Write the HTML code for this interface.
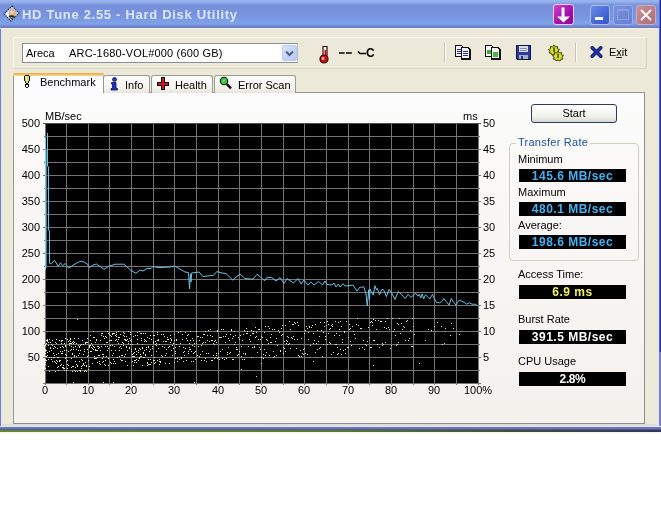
<!DOCTYPE html>
<html><head><meta charset="utf-8">
<style>
html,body{margin:0;padding:0;width:661px;height:512px;overflow:hidden;background:#fff;}
body{position:relative;font-family:"Liberation Sans",sans-serif;font-size:11px;color:#000;}
.abs{position:absolute;}
.lab{position:absolute;font-size:11px;line-height:14px;white-space:nowrap;color:#000;}
#win{position:absolute;left:0;top:0;width:661px;height:432px;background:#ECE9D8;will-change:transform;}
#title{position:absolute;left:0;top:0;width:661px;height:28px;
 background:linear-gradient(to bottom,#98B6EE 0px,#94B0EC 2px,#7E98DC 4px,#7690DC 7px,#7892DE 14px,#7B9AE4 19px,#80A2E8 24px,#7488D0 26px,#6A7AC0 28px);}
.ttxt{position:absolute;left:22px;top:6px;font-weight:bold;font-size:13px;letter-spacing:0.7px;color:#DCE6F8;line-height:18px;white-space:nowrap;}
.tb{position:absolute;top:5px;width:20px;height:20px;border-radius:3px;box-sizing:border-box;}
.txt{position:absolute;white-space:nowrap;line-height:14px;}
.box{position:absolute;left:519px;width:107px;background:#000;}
.val{position:absolute;left:0;width:107px;text-align:center;font-weight:bold;font-size:12px;letter-spacing:0.5px;line-height:14px;}
.tab{position:absolute;top:75px;height:18px;box-sizing:border-box;border:1px solid #9C9C90;border-bottom:none;border-radius:3px 3px 0 0;
 background:linear-gradient(to bottom,#FEFEFE,#F4F3EE 70%,#E6E4DA);}
</style></head><body>
<div id="win">
 <div id="title">
  <svg class="abs" style="left:3px;top:5px" width="17" height="17" viewBox="0 0 17 17">
   <path d="M9 1L16 8L8 16L1 9Z" fill="#c8d4ec" stroke="#1c2440" stroke-width="1.1" stroke-dasharray="1.4 0.9"/>
   <path d="M2.5 9L6 5.5L8 9.5L6 13Z" fill="#eef2f8"/>
   <circle cx="9.6" cy="8.2" r="3.9" fill="#dcb494"/>
   <circle cx="9" cy="7.4" r="1.6" fill="#ecd0b8"/>
   <path d="M5.5 11Q8.5 9.3 12 11.2L8.5 14.5Z" fill="#1c2418"/>
   <path d="M7 12.2Q8.7 11.4 10.4 12.3L8.6 13.6Z" fill="#88a070"/>
  </svg>
  <div class="ttxt">HD Tune 2.55 - Hard Disk Utility</div>
  <!-- purple button -->
  <div class="tb" style="left:553px;top:4px;width:21px;height:21px;border:1px solid #F0C8F0;background:linear-gradient(135deg,#D040D0,#A010A8 60%,#900898);"></div>
  <svg class="abs" style="left:553px;top:4px" width="21" height="21">
   <rect x="8.5" y="3.5" width="3" height="10" fill="#fff"/>
   <path d="M4 12.5H17L10.5 18.5Z" fill="#fff"/>
  </svg>
  <!-- minimize -->
  <div class="tb" style="left:590px;border:1px solid #A8BCF0;background:linear-gradient(135deg,#6C8CE4,#3E62D0 70%,#3A5CC8);"></div>
  <div class="abs" style="left:595px;top:17px;width:8px;height:3px;background:#fff;"></div>
  <!-- maximize disabled -->
  <div class="tb" style="left:613px;border:1px solid #98AEE6;background:linear-gradient(135deg,#7890DC,#6880D4);"></div>
  <div class="abs" style="left:617px;top:9px;width:12px;height:11px;box-sizing:border-box;border:1px solid #8AA0E0;border-top:2px solid #8AA0E0;"></div>
  <!-- close -->
  <div class="tb" style="left:636px;border:1px solid #D0A8C0;background:linear-gradient(135deg,#C89098,#B47880 70%,#A87078);"></div>
  <svg class="abs" style="left:636px;top:5px" width="20" height="20">
   <path d="M5 5L15 15M15 5L5 15" stroke="#fff" stroke-width="1.8"/>
  </svg>
 </div>
 <!-- frame borders -->
 <div class="abs" style="left:0;top:28px;width:1px;height:404px;background:#7080C4;"></div>
 <div class="abs" style="left:1px;top:28px;width:1px;height:399px;background:#E0E4F8;"></div>
 <div class="abs" style="left:659px;top:0;width:1px;height:352px;background:#5C6CCC;"></div>
 <div class="abs" style="left:660px;top:0;width:1px;height:352px;background:#1C2CA8;"></div>
 <div class="abs" style="left:659px;top:352px;width:2px;height:78px;background:#7880C8;"></div>
 <div class="abs" style="left:658px;top:28px;width:1px;height:399px;background:#E0E8F8;"></div>
 <div class="abs" style="left:0;top:426px;width:661px;height:1px;background:#E0E4F8;"></div>
 <div class="abs" style="left:2px;top:424px;width:655px;height:2px;background:#DEDED8;"></div>
 <div class="abs" style="left:0;top:427px;width:661px;height:2px;background:#6E74B8;"></div>
 <div class="abs" style="left:0;top:429px;width:661px;height:1px;background:#505888;"></div>
 <div class="abs" style="left:0;top:430px;width:661px;height:2px;background:linear-gradient(to right,#5E8A3A 0%,#567A38 50%,#3A4C40 80%,#303858 100%);"></div>
 <div class="abs" style="left:0;top:432px;width:661px;height:1px;background:#F0F4E4;"></div>
 <div class="abs" style="left:0;top:28px;width:657px;height:1px;background:#F0F0E8;"></div>

 <!-- rebar -->
 <div class="abs" style="left:13px;top:37px;width:634px;height:32px;box-sizing:border-box;border:1px solid #D8D4C4;border-top-color:#F8F6EE;border-left-color:#F8F6EE;border-radius:3px;"></div>
 <!-- combo -->
 <div class="abs" style="left:22px;top:43px;width:276px;height:20px;box-sizing:border-box;border:1px solid #8A9098;border-right-color:#B8BCC0;background:#fff;"></div>
 <div class="txt" style="left:26px;top:46px;">Areca</div>
 <div class="txt" style="left:69px;top:46px;letter-spacing:0.18px;">ARC-1680-VOL#000 (600 GB)</div>
 <div class="abs" style="left:282px;top:45px;width:15px;height:16px;box-sizing:border-box;border:1px solid #B8CCF8;border-radius:2px;background:linear-gradient(135deg,#D8E4FC,#B4C8F4);"></div>
 <svg class="abs" style="left:282px;top:45px" width="15" height="16">
  <path d="M4 6.5L7.5 10L11 6.5" stroke="#4D6185" stroke-width="2" fill="none"/>
 </svg>
 <!-- thermometer -->
 <svg class="abs" style="left:318px;top:45px" width="12" height="19" viewBox="0 0 12 19">
  <path d="M5 1.5H9V12.5H5Z" fill="#f8f4f4" stroke="#380808" stroke-width="1.2"/>
  <path d="M6.5 5H8.5V13H6.5Z" fill="#c81010"/>
  <circle cx="6" cy="14" r="4" fill="#cc1414" stroke="#380808" stroke-width="1.2"/>
  <circle cx="5" cy="13.5" r="1.3" fill="#f8d0d0"/>
 </svg>
 <svg class="abs" style="left:338px;top:50px" width="16" height="6"><path d="M1 3H6.6M8 3H13.8" stroke="#000" stroke-width="1.5"/></svg>
 <svg class="abs" style="left:357px;top:50px" width="10" height="6"><path d="M1 1.5L3 3.5H9" stroke="#000" stroke-width="1.6" fill="none"/></svg>
 <div class="txt" style="left:366px;top:46px;font-weight:bold;font-size:12px;line-height:14px;">C</div>
 <!-- separators -->
 <div class="abs" style="left:444px;top:43px;width:1px;height:19px;background:#C8C4B4;"></div>
 <div class="abs" style="left:445px;top:43px;width:1px;height:19px;background:#FCFCF8;"></div>
 <div class="abs" style="left:575px;top:43px;width:1px;height:19px;background:#C8C4B4;"></div>
 <div class="abs" style="left:576px;top:43px;width:1px;height:19px;background:#FCFCF8;"></div>
 <!-- toolbar icons -->
 <svg class="abs" style="left:455px;top:45px" width="17" height="16" shape-rendering="crispEdges">
  <path d="M0 0H6L8 2V12H0Z" fill="#101010"/>
  <path d="M1 1H6L7 2V11H1Z" fill="#f4f4fa"/>
  <path d="M2 4H6V5H2ZM2 6H6V7H2ZM2 8H6V9H2Z" fill="#2830a0"/>
  <path d="M6 2H13L16 5V15H6Z" fill="#101010"/>
  <path d="M7 3H12L14 5V13H7Z" fill="#f4f4fa"/>
  <path d="M8 6H13V7H8ZM8 8H13V9H8ZM8 10H13V11H8Z" fill="#2830a0"/>
 </svg>
 <svg class="abs" style="left:485px;top:45px" width="17" height="16" shape-rendering="crispEdges">
  <path d="M0 0H6L8 2V12H0Z" fill="#101010"/>
  <path d="M1 1H6L7 2V11H1Z" fill="#f4f4fa"/>
  <path d="M2 5H6V9H2Z" fill="#40b030"/>
  <path d="M6 2H13L16 5V15H6Z" fill="#101010"/>
  <path d="M7 3H12L14 5V13H7Z" fill="#f4f4fa"/>
  <path d="M8 7H13V12H8Z" fill="#48b838"/>
 </svg>
 <svg class="abs" style="left:516px;top:45px" width="16" height="16" shape-rendering="crispEdges">
  <path d="M0 0H15V15H1L0 14Z" fill="#101848"/>
  <path d="M1 1H14V14H2L1 13Z" fill="#2a3aa0"/>
  <path d="M3 1H12V7H3Z" fill="#d8dce8"/>
  <path d="M4 3H11V4H4ZM4 5H11V6H4Z" fill="#8890b8"/>
  <path d="M3 10H12V14H3Z" fill="#a8acc0"/>
  <path d="M5 11H7V14H5Z" fill="#303860"/>
 </svg>
 <svg class="abs" style="left:547px;top:44px" width="18" height="18">
  <path d="M7 1L8.5 3L10.5 2.5L10.5 4.8L12.5 5.5L11 7.3L12 9L9.8 9.2L9 11L7 10L5 11L4.2 9.2L2 9L3 7.3L1.5 5.5L3.5 4.8L3.5 2.5L5.5 3Z" fill="#d8e020" stroke="#303010" stroke-width="0.9"/>
  <path d="M11 7L12.5 9L14.5 8.5L14.5 10.8L16.5 11.5L15 13.3L16 15L13.8 15.2L13 17L11 16L9 17L8.2 15.2L6 15L7 13.3L5.5 11.5L7.5 10.8L7.5 8.5L9.5 9Z" fill="#d8e020" stroke="#303010" stroke-width="0.9"/>
  <path d="M7 3.5V8M11 9.5V14" stroke="#404010" stroke-width="1.5"/>
 </svg>
 <svg class="abs" style="left:589px;top:45px" width="15" height="14">
  <path d="M3.2 2.8L11.8 11.2M11.8 2.8L3.2 11.2" stroke="#0a0a50" stroke-width="3.6" stroke-linecap="round"/>
  <path d="M3.2 2.8L11.8 11.2M11.8 2.8L3.2 11.2" stroke="#2234b0" stroke-width="2" stroke-linecap="round"/>
 </svg>
 <div class="txt" style="left:609px;top:45px;">E<span style="text-decoration:underline">x</span>it</div>

 <!-- tabs -->
 <div class="abs" style="left:13px;top:92px;width:632px;height:332px;box-sizing:border-box;border:1px solid #919B9C;border-right-color:#8E9090;border-bottom-color:#8E9090;background:linear-gradient(to bottom,#FCFCFC,#F8F7F5 40%,#F2F1EC);"></div>
 <div class="tab" style="left:103px;width:47px;"></div>
 <div class="tab" style="left:151px;width:62px;"></div>
 <div class="tab" style="left:214px;width:82px;"></div>
 <div class="abs" style="left:13px;top:73px;width:91px;height:20px;box-sizing:border-box;border:1px solid #919B9C;border-bottom:none;border-radius:3px 3px 0 0;background:#FCFCFE;"></div>
 <div class="abs" style="left:13px;top:73px;width:91px;height:3px;border-radius:3px 3px 0 0;background:linear-gradient(to bottom,#E8A848,#F4C468 60%,#FAD896);"></div>
 <svg class="abs" style="left:24px;top:75px" width="6" height="13" shape-rendering="crispEdges">
  <path d="M1 0H5V1H6V6H5V8H4V9H2V8H1V6H0V1H1Z" fill="#101010"/>
  <path d="M1 1H5V6H4V8H2V6H1Z" fill="#d8e060"/>
  <path d="M2 1H3V6H2Z" fill="#f0f8a0"/>
  <path d="M1 9H5V12H4V13H2V12H1Z" fill="#101010"/>
  <path d="M2 10H4V12H2Z" fill="#fff"/>
 </svg>
 <div class="txt" style="left:40px;top:75px;">Benchmark</div>
 <svg class="abs" style="left:110px;top:77px" width="9" height="14">
  <circle cx="4.5" cy="2.5" r="2" fill="#2840c8" stroke="#101860" stroke-width="0.8"/>
  <path d="M1.5 5.5H6V11.5H7.5V13H1V11.5H2.5V7H1.5Z" fill="#1830c0" stroke="#101860" stroke-width="0.8"/>
 </svg>
 <div class="txt" style="left:125px;top:78px;">Info</div>
 <svg class="abs" style="left:156px;top:77px" width="14" height="14">
  <path d="M5 0H9V5H13V9H9V13H5V9H1V5H5Z" fill="#101010" shape-rendering="crispEdges"/>
  <path d="M6 1H8V6H12V8H8V12H6V8H2V6H6Z" fill="#d01818" shape-rendering="crispEdges"/>
 </svg>
 <div class="txt" style="left:175px;top:78px;">Health</div>
 <svg class="abs" style="left:219px;top:76px" width="14" height="15">
  <circle cx="5" cy="5" r="3.7" fill="#40c040" stroke="#082008" stroke-width="1.1"/>
  <path d="M3.5 6L6 3.5" stroke="#a0f0a0" stroke-width="1"/>
  <path d="M7.8 8.2L12 12.4" stroke="#100818" stroke-width="2.4"/>
 </svg>
 <div class="txt" style="left:238px;top:78px;">Error Scan</div>

 <svg class="abs" style="left:0;top:0" width="661" height="432"><rect x="45" y="123" width="434" height="261" fill="#000"/><path d="M45.5 123V385 M66.5 123V385 M88.5 123V385 M109.5 123V385 M131.5 123V385 M153.5 123V385 M174.5 123V385 M196.5 123V385 M218.5 123V385 M239.5 123V385 M261.5 123V385 M283.5 123V385 M304.5 123V385 M326.5 123V385 M348.5 123V385 M369.5 123V385 M391.5 123V385 M413.5 123V385 M434.5 123V385 M456.5 123V385 M478.5 123V385 M43 123.5H481 M44 136.5H480 M43 149.5H481 M44 162.5H480 M43 175.5H481 M44 188.5H480 M43 201.5H481 M44 214.5H480 M43 227.5H481 M44 240.5H480 M43 253.5H481 M44 266.5H480 M43 279.5H481 M44 292.5H480 M43 305.5H481 M44 318.5H480 M43 331.5H481 M44 344.5H480 M43 357.5H481 M44 370.5H480 M43 383.5H481" stroke="#747474" stroke-width="1" fill="none" shape-rendering="crispEdges"/><path d="M43 123.5H481" stroke="#505050" stroke-width="1" shape-rendering="crispEdges"/><path d="M46 343h1v1h-1zM46 360h1v1h-1zM46 340h1v1h-1zM46 356h1v1h-1zM46 350h1v1h-1zM47 355h1v1h-1zM47 339h1v1h-1zM47 352h1v1h-1zM47 340h1v1h-1zM47 341h1v1h-1zM48 366h1v1h-1zM48 342h1v1h-1zM48 345h1v1h-1zM48 359h1v1h-1zM49 357h1v1h-1zM49 351h1v1h-1zM49 371h1v1h-1zM49 339h1v1h-1zM50 347h1v1h-1zM50 342h1v1h-1zM50 342h1v1h-1zM50 348h1v1h-1zM51 344h1v1h-1zM51 357h1v1h-1zM51 359h1v1h-1zM51 350h1v1h-1zM52 340h1v1h-1zM52 340h1v1h-1zM52 345h1v1h-1zM52 361h1v1h-1zM53 348h1v1h-1zM53 357h1v1h-1zM53 353h1v1h-1zM53 348h1v1h-1zM54 361h1v1h-1zM54 346h1v1h-1zM54 357h1v1h-1zM54 355h1v1h-1zM55 362h1v1h-1zM55 347h1v1h-1zM55 371h1v1h-1zM55 342h1v1h-1zM56 363h1v1h-1zM56 343h1v1h-1zM56 354h1v1h-1zM56 339h1v1h-1zM56 360h1v1h-1zM57 357h1v1h-1zM57 367h1v1h-1zM57 348h1v1h-1zM57 361h1v1h-1zM58 357h1v1h-1zM58 353h1v1h-1zM58 366h1v1h-1zM58 370h1v1h-1zM59 360h1v1h-1zM59 340h1v1h-1zM59 361h1v1h-1zM59 360h1v1h-1zM60 365h1v1h-1zM60 347h1v1h-1zM60 351h1v1h-1zM60 360h1v1h-1zM61 353h1v1h-1zM61 343h1v1h-1zM61 341h1v1h-1zM61 340h1v1h-1zM61 364h1v1h-1zM62 346h1v1h-1zM62 351h1v1h-1zM62 367h1v1h-1zM62 340h1v1h-1zM62 353h1v1h-1zM63 368h1v1h-1zM63 365h1v1h-1zM63 367h1v1h-1zM63 347h1v1h-1zM64 350h1v1h-1zM64 368h1v1h-1zM64 370h1v1h-1zM64 343h1v1h-1zM64 343h1v1h-1zM65 345h1v1h-1zM65 354h1v1h-1zM65 358h1v1h-1zM65 346h1v1h-1zM65 338h1v1h-1zM66 350h1v1h-1zM66 357h1v1h-1zM66 370h1v1h-1zM66 361h1v1h-1zM66 355h1v1h-1zM67 360h1v1h-1zM67 339h1v1h-1zM67 368h1v1h-1zM67 364h1v1h-1zM68 365h1v1h-1zM68 351h1v1h-1zM68 351h1v1h-1zM68 341h1v1h-1zM69 340h1v1h-1zM69 340h1v1h-1zM69 345h1v1h-1zM69 343h1v1h-1zM70 339h1v1h-1zM70 338h1v1h-1zM70 343h1v1h-1zM70 341h1v1h-1zM70 350h1v1h-1zM71 367h1v1h-1zM71 358h1v1h-1zM71 343h1v1h-1zM71 346h1v1h-1zM71 349h1v1h-1zM72 342h1v1h-1zM72 366h1v1h-1zM72 371h1v1h-1zM72 353h1v1h-1zM72 354h1v1h-1zM73 341h1v1h-1zM73 349h1v1h-1zM73 347h1v1h-1zM73 366h1v1h-1zM73 343h1v1h-1zM74 370h1v1h-1zM74 355h1v1h-1zM74 342h1v1h-1zM74 356h1v1h-1zM74 338h1v1h-1zM75 371h1v1h-1zM75 367h1v1h-1zM75 361h1v1h-1zM75 346h1v1h-1zM76 343h1v1h-1zM76 364h1v1h-1zM76 356h1v1h-1zM76 364h1v1h-1zM76 349h1v1h-1zM77 365h1v1h-1zM77 371h1v1h-1zM77 366h1v1h-1zM77 365h1v1h-1zM77 365h1v1h-1zM78 345h1v1h-1zM78 355h1v1h-1zM78 350h1v1h-1zM78 338h1v1h-1zM79 347h1v1h-1zM79 346h1v1h-1zM79 361h1v1h-1zM79 370h1v1h-1zM79 353h1v1h-1zM80 371h1v1h-1zM80 370h1v1h-1zM80 350h1v1h-1zM80 345h1v1h-1zM81 344h1v1h-1zM81 344h1v1h-1zM81 359h1v1h-1zM81 368h1v1h-1zM81 366h1v1h-1zM82 360h1v1h-1zM82 365h1v1h-1zM82 340h1v1h-1zM82 360h1v1h-1zM83 364h1v1h-1zM83 363h1v1h-1zM83 354h1v1h-1zM83 344h1v1h-1zM84 349h1v1h-1zM84 365h1v1h-1zM84 371h1v1h-1zM84 351h1v1h-1zM85 370h1v1h-1zM85 362h1v1h-1zM85 343h1v1h-1zM85 342h1v1h-1zM85 343h1v1h-1zM86 365h1v1h-1zM86 342h1v1h-1zM86 366h1v1h-1zM86 371h1v1h-1zM87 349h1v1h-1zM87 356h1v1h-1zM87 342h1v1h-1zM87 338h1v1h-1zM88 360h1v1h-1zM88 355h1v1h-1zM88 369h1v1h-1zM88 352h1v1h-1zM89 366h1v1h-1zM89 345h1v1h-1zM89 346h1v1h-1zM89 347h1v1h-1zM90 351h1v1h-1zM90 340h1v1h-1zM90 345h1v1h-1zM90 335h1v1h-1zM91 343h1v1h-1zM91 347h1v1h-1zM91 351h1v1h-1zM92 345h1v1h-1zM92 363h1v1h-1zM92 348h1v1h-1zM93 349h1v1h-1zM93 331h1v1h-1zM93 346h1v1h-1zM93 337h1v1h-1zM94 358h1v1h-1zM94 337h1v1h-1zM94 347h1v1h-1zM94 356h1v1h-1zM95 342h1v1h-1zM95 349h1v1h-1zM95 350h1v1h-1zM95 358h1v1h-1zM96 350h1v1h-1zM96 339h1v1h-1zM96 340h1v1h-1zM96 358h1v1h-1zM97 350h1v1h-1zM97 357h1v1h-1zM97 362h1v1h-1zM97 346h1v1h-1zM98 348h1v1h-1zM98 348h1v1h-1zM98 355h1v1h-1zM98 346h1v1h-1zM99 347h1v1h-1zM99 363h1v1h-1zM99 355h1v1h-1zM99 361h1v1h-1zM100 340h1v1h-1zM100 350h1v1h-1zM100 364h1v1h-1zM101 335h1v1h-1zM101 335h1v1h-1zM101 346h1v1h-1zM101 333h1v1h-1zM102 333h1v1h-1zM102 354h1v1h-1zM102 358h1v1h-1zM102 362h1v1h-1zM103 356h1v1h-1zM103 354h1v1h-1zM103 336h1v1h-1zM103 361h1v1h-1zM104 338h1v1h-1zM104 364h1v1h-1zM104 344h1v1h-1zM105 365h1v1h-1zM105 360h1v1h-1zM105 336h1v1h-1zM105 346h1v1h-1zM106 342h1v1h-1zM106 337h1v1h-1zM106 342h1v1h-1zM106 356h1v1h-1zM107 350h1v1h-1zM107 346h1v1h-1zM107 331h1v1h-1zM107 342h1v1h-1zM108 348h1v1h-1zM108 333h1v1h-1zM108 365h1v1h-1zM108 358h1v1h-1zM109 334h1v1h-1zM109 340h1v1h-1zM109 332h1v1h-1zM110 340h1v1h-1zM110 335h1v1h-1zM110 345h1v1h-1zM110 362h1v1h-1zM111 340h1v1h-1zM111 336h1v1h-1zM111 363h1v1h-1zM111 350h1v1h-1zM112 334h1v1h-1zM112 333h1v1h-1zM112 355h1v1h-1zM112 345h1v1h-1zM113 363h1v1h-1zM113 353h1v1h-1zM113 359h1v1h-1zM113 333h1v1h-1zM114 333h1v1h-1zM114 361h1v1h-1zM114 346h1v1h-1zM115 350h1v1h-1zM115 363h1v1h-1zM115 340h1v1h-1zM115 335h1v1h-1zM116 339h1v1h-1zM116 334h1v1h-1zM116 336h1v1h-1zM116 332h1v1h-1zM117 341h1v1h-1zM117 341h1v1h-1zM117 357h1v1h-1zM117 341h1v1h-1zM118 337h1v1h-1zM118 343h1v1h-1zM118 331h1v1h-1zM118 339h1v1h-1zM119 356h1v1h-1zM119 350h1v1h-1zM119 337h1v1h-1zM119 347h1v1h-1zM120 334h1v1h-1zM120 359h1v1h-1zM120 346h1v1h-1zM121 360h1v1h-1zM121 344h1v1h-1zM121 348h1v1h-1zM121 355h1v1h-1zM122 342h1v1h-1zM122 360h1v1h-1zM122 355h1v1h-1zM123 345h1v1h-1zM123 343h1v1h-1zM123 332h1v1h-1zM123 335h1v1h-1zM124 356h1v1h-1zM124 339h1v1h-1zM124 336h1v1h-1zM124 333h1v1h-1zM125 361h1v1h-1zM125 354h1v1h-1zM125 340h1v1h-1zM125 339h1v1h-1zM126 347h1v1h-1zM126 336h1v1h-1zM126 346h1v1h-1zM126 340h1v1h-1zM127 365h1v1h-1zM127 350h1v1h-1zM127 339h1v1h-1zM128 341h1v1h-1zM128 343h1v1h-1zM128 331h1v1h-1zM129 347h1v1h-1zM129 348h1v1h-1zM129 338h1v1h-1zM129 348h1v1h-1zM130 340h1v1h-1zM130 334h1v1h-1zM130 344h1v1h-1zM130 332h1v1h-1zM131 341h1v1h-1zM131 339h1v1h-1zM131 351h1v1h-1zM131 349h1v1h-1zM132 354h1v1h-1zM132 356h1v1h-1zM132 361h1v1h-1zM132 344h1v1h-1zM133 365h1v1h-1zM133 336h1v1h-1zM133 356h1v1h-1zM133 353h1v1h-1zM134 360h1v1h-1zM134 362h1v1h-1zM134 352h1v1h-1zM134 356h1v1h-1zM135 335h1v1h-1zM135 349h1v1h-1zM135 348h1v1h-1zM135 360h1v1h-1zM136 359h1v1h-1zM136 351h1v1h-1zM136 362h1v1h-1zM136 354h1v1h-1zM137 339h1v1h-1zM137 332h1v1h-1zM137 335h1v1h-1zM137 343h1v1h-1zM138 360h1v1h-1zM138 350h1v1h-1zM138 352h1v1h-1zM138 352h1v1h-1zM139 348h1v1h-1zM139 331h1v1h-1zM139 358h1v1h-1zM139 357h1v1h-1zM140 349h1v1h-1zM140 354h1v1h-1zM140 333h1v1h-1zM140 356h1v1h-1zM141 333h1v1h-1zM141 340h1v1h-1zM141 356h1v1h-1zM141 338h1v1h-1zM142 365h1v1h-1zM142 348h1v1h-1zM142 344h1v1h-1zM142 347h1v1h-1zM143 357h1v1h-1zM143 352h1v1h-1zM143 353h1v1h-1zM143 333h1v1h-1zM144 339h1v1h-1zM144 357h1v1h-1zM144 341h1v1h-1zM144 350h1v1h-1zM145 333h1v1h-1zM145 340h1v1h-1zM145 354h1v1h-1zM145 355h1v1h-1zM146 341h1v1h-1zM146 349h1v1h-1zM146 347h1v1h-1zM146 347h1v1h-1zM147 362h1v1h-1zM147 337h1v1h-1zM147 365h1v1h-1zM147 363h1v1h-1zM148 347h1v1h-1zM148 359h1v1h-1zM148 364h1v1h-1zM148 346h1v1h-1zM149 338h1v1h-1zM149 364h1v1h-1zM149 338h1v1h-1zM149 351h1v1h-1zM150 349h1v1h-1zM150 364h1v1h-1zM150 335h1v1h-1zM150 359h1v1h-1zM151 362h1v1h-1zM151 355h1v1h-1zM151 339h1v1h-1zM151 362h1v1h-1zM152 331h1v1h-1zM152 331h1v1h-1zM152 348h1v1h-1zM152 346h1v1h-1zM153 335h1v1h-1zM153 343h1v1h-1zM153 342h1v1h-1zM153 360h1v1h-1zM154 357h1v1h-1zM154 360h1v1h-1zM154 335h1v1h-1zM154 363h1v1h-1zM155 362h1v1h-1zM155 341h1v1h-1zM155 344h1v1h-1zM155 344h1v1h-1zM156 351h1v1h-1zM156 343h1v1h-1zM156 345h1v1h-1zM157 332h1v1h-1zM157 334h1v1h-1zM157 360h1v1h-1zM157 340h1v1h-1zM158 339h1v1h-1zM158 340h1v1h-1zM158 348h1v1h-1zM159 344h1v1h-1zM159 364h1v1h-1zM159 361h1v1h-1zM159 359h1v1h-1zM160 361h1v1h-1zM160 362h1v1h-1zM161 355h1v1h-1zM161 334h1v1h-1zM162 346h1v1h-1zM162 356h1v1h-1zM163 341h1v1h-1zM163 334h1v1h-1zM164 336h1v1h-1zM164 347h1v1h-1zM165 341h1v1h-1zM165 355h1v1h-1zM165 363h1v1h-1zM166 353h1v1h-1zM166 341h1v1h-1zM166 349h1v1h-1zM167 337h1v1h-1zM167 337h1v1h-1zM167 339h1v1h-1zM168 347h1v1h-1zM168 339h1v1h-1zM169 363h1v1h-1zM169 346h1v1h-1zM170 338h1v1h-1zM170 335h1v1h-1zM170 342h1v1h-1zM171 339h1v1h-1zM171 340h1v1h-1zM171 350h1v1h-1zM172 355h1v1h-1zM172 345h1v1h-1zM173 348h1v1h-1zM173 343h1v1h-1zM174 334h1v1h-1zM174 340h1v1h-1zM174 362h1v1h-1zM175 347h1v1h-1zM175 351h1v1h-1zM175 358h1v1h-1zM176 340h1v1h-1zM176 339h1v1h-1zM176 344h1v1h-1zM177 361h1v1h-1zM177 358h1v1h-1zM178 332h1v1h-1zM178 332h1v1h-1zM179 359h1v1h-1zM179 346h1v1h-1zM180 331h1v1h-1zM180 343h1v1h-1zM181 357h1v1h-1zM181 358h1v1h-1zM182 339h1v1h-1zM182 334h1v1h-1zM183 347h1v1h-1zM183 352h1v1h-1zM183 361h1v1h-1zM184 351h1v1h-1zM184 355h1v1h-1zM185 348h1v1h-1zM185 332h1v1h-1zM186 338h1v1h-1zM186 360h1v1h-1zM187 340h1v1h-1zM187 335h1v1h-1zM188 351h1v1h-1zM188 353h1v1h-1zM188 334h1v1h-1zM189 347h1v1h-1zM189 349h1v1h-1zM189 343h1v1h-1zM190 349h1v1h-1zM190 331h1v1h-1zM190 340h1v1h-1zM191 361h1v1h-1zM191 351h1v1h-1zM192 345h1v1h-1zM192 338h1v1h-1zM193 361h1v1h-1zM193 353h1v1h-1zM193 340h1v1h-1zM194 346h1v1h-1zM194 352h1v1h-1zM194 343h1v1h-1zM195 351h1v1h-1zM195 359h1v1h-1zM196 331h1v1h-1zM196 341h1v1h-1zM196 343h1v1h-1zM197 336h1v1h-1zM197 355h1v1h-1zM198 346h1v1h-1zM198 336h1v1h-1zM199 340h1v1h-1zM199 356h1v1h-1zM200 337h1v1h-1zM200 354h1v1h-1zM201 360h1v1h-1zM201 345h1v1h-1zM202 337h1v1h-1zM202 343h1v1h-1zM202 351h1v1h-1zM203 334h1v1h-1zM203 342h1v1h-1zM204 360h1v1h-1zM204 334h1v1h-1zM205 331h1v1h-1zM205 342h1v1h-1zM205 358h1v1h-1zM206 353h1v1h-1zM206 361h1v1h-1zM207 340h1v1h-1zM207 335h1v1h-1zM208 353h1v1h-1zM208 330h1v1h-1zM209 341h1v1h-1zM209 341h1v1h-1zM210 335h1v1h-1zM210 329h1v1h-1zM211 340h1v1h-1zM211 360h1v1h-1zM212 360h1v1h-1zM212 336h1v1h-1zM212 340h1v1h-1zM213 355h1v1h-1zM213 343h1v1h-1zM214 344h1v1h-1zM214 341h1v1h-1zM214 358h1v1h-1zM215 340h1v1h-1zM215 357h1v1h-1zM216 342h1v1h-1zM216 355h1v1h-1zM216 353h1v1h-1zM217 330h1v1h-1zM217 331h1v1h-1zM217 358h1v1h-1zM218 353h1v1h-1zM218 357h1v1h-1zM219 337h1v1h-1zM219 359h1v1h-1zM220 337h1v1h-1zM220 351h1v1h-1zM221 337h1v1h-1zM221 329h1v1h-1zM222 358h1v1h-1zM222 349h1v1h-1zM223 329h1v1h-1zM223 336h1v1h-1zM224 359h1v1h-1zM224 359h1v1h-1zM225 336h1v1h-1zM225 342h1v1h-1zM226 358h1v1h-1zM226 334h1v1h-1zM227 352h1v1h-1zM227 354h1v1h-1zM228 347h1v1h-1zM228 338h1v1h-1zM229 340h1v1h-1zM229 353h1v1h-1zM230 334h1v1h-1zM230 352h1v1h-1zM231 330h1v1h-1zM231 329h1v1h-1zM232 338h1v1h-1zM232 359h1v1h-1zM233 359h1v1h-1zM233 336h1v1h-1zM234 331h1v1h-1zM234 344h1v1h-1zM235 342h1v1h-1zM235 335h1v1h-1zM236 347h1v1h-1zM236 349h1v1h-1zM237 355h1v1h-1zM237 349h1v1h-1zM238 354h1v1h-1zM238 337h1v1h-1zM239 339h1v1h-1zM239 351h1v1h-1zM240 335h1v1h-1zM240 335h1v1h-1zM241 356h1v1h-1zM241 346h1v1h-1zM242 340h1v1h-1zM242 359h1v1h-1zM243 334h1v1h-1zM243 353h1v1h-1zM244 359h1v1h-1zM244 330h1v1h-1zM245 353h1v1h-1zM245 354h1v1h-1zM246 328h1v1h-1zM247 331h1v1h-1zM247 333h1v1h-1zM248 346h1v1h-1zM249 339h1v1h-1zM250 341h1v1h-1zM250 335h1v1h-1zM251 357h1v1h-1zM251 330h1v1h-1zM252 347h1v1h-1zM252 333h1v1h-1zM253 331h1v1h-1zM253 333h1v1h-1zM254 346h1v1h-1zM254 347h1v1h-1zM255 327h1v1h-1zM255 337h1v1h-1zM256 332h1v1h-1zM256 336h1v1h-1zM257 352h1v1h-1zM257 344h1v1h-1zM258 329h1v1h-1zM258 339h1v1h-1zM259 347h1v1h-1zM259 329h1v1h-1zM260 349h1v1h-1zM260 339h1v1h-1zM261 336h1v1h-1zM261 357h1v1h-1zM262 344h1v1h-1zM262 337h1v1h-1zM263 354h1v1h-1zM263 358h1v1h-1zM264 332h1v1h-1zM264 349h1v1h-1zM265 326h1v1h-1zM265 355h1v1h-1zM266 352h1v1h-1zM266 339h1v1h-1zM267 340h1v1h-1zM268 326h1v1h-1zM268 343h1v1h-1zM269 355h1v1h-1zM269 328h1v1h-1zM270 337h1v1h-1zM270 342h1v1h-1zM271 334h1v1h-1zM271 342h1v1h-1zM272 329h1v1h-1zM273 351h1v1h-1zM273 357h1v1h-1zM274 329h1v1h-1zM274 356h1v1h-1zM275 341h1v1h-1zM276 355h1v1h-1zM276 338h1v1h-1zM277 345h1v1h-1zM278 330h1v1h-1zM279 332h1v1h-1zM280 351h1v1h-1zM280 350h1v1h-1zM281 328h1v1h-1zM281 335h1v1h-1zM282 334h1v1h-1zM282 325h1v1h-1zM283 347h1v1h-1zM283 353h1v1h-1zM284 341h1v1h-1zM284 348h1v1h-1zM285 351h1v1h-1zM285 325h1v1h-1zM286 340h1v1h-1zM286 343h1v1h-1zM287 336h1v1h-1zM287 341h1v1h-1zM288 344h1v1h-1zM288 337h1v1h-1zM289 321h1v1h-1zM289 343h1v1h-1zM290 329h1v1h-1zM290 348h1v1h-1zM291 337h1v1h-1zM292 338h1v1h-1zM292 324h1v1h-1zM293 336h1v1h-1zM293 324h1v1h-1zM294 339h1v1h-1zM294 322h1v1h-1zM295 323h1v1h-1zM296 348h1v1h-1zM297 322h1v1h-1zM297 339h1v1h-1zM298 355h1v1h-1zM298 325h1v1h-1zM299 356h1v1h-1zM300 350h1v1h-1zM301 356h1v1h-1zM301 338h1v1h-1zM302 353h1v1h-1zM303 349h1v1h-1zM303 354h1v1h-1zM304 333h1v1h-1zM304 348h1v1h-1zM305 353h1v1h-1zM305 330h1v1h-1zM306 326h1v1h-1zM307 354h1v1h-1zM307 328h1v1h-1zM308 339h1v1h-1zM308 332h1v1h-1zM309 327h1v1h-1zM309 326h1v1h-1zM310 345h1v1h-1zM311 327h1v1h-1zM312 325h1v1h-1zM313 343h1v1h-1zM313 333h1v1h-1zM314 340h1v1h-1zM315 352h1v1h-1zM315 324h1v1h-1zM316 343h1v1h-1zM317 349h1v1h-1zM317 330h1v1h-1zM318 341h1v1h-1zM319 348h1v1h-1zM319 336h1v1h-1zM320 347h1v1h-1zM320 322h1v1h-1zM321 330h1v1h-1zM322 356h1v1h-1zM323 344h1v1h-1zM323 332h1v1h-1zM324 322h1v1h-1zM324 326h1v1h-1zM325 336h1v1h-1zM325 339h1v1h-1zM326 325h1v1h-1zM327 344h1v1h-1zM327 321h1v1h-1zM328 333h1v1h-1zM328 324h1v1h-1zM329 329h1v1h-1zM329 342h1v1h-1zM330 328h1v1h-1zM330 343h1v1h-1zM331 325h1v1h-1zM331 354h1v1h-1zM332 326h1v1h-1zM332 324h1v1h-1zM333 352h1v1h-1zM334 335h1v1h-1zM335 321h1v1h-1zM335 344h1v1h-1zM336 333h1v1h-1zM336 344h1v1h-1zM337 354h1v1h-1zM337 347h1v1h-1zM338 353h1v1h-1zM338 322h1v1h-1zM339 335h1v1h-1zM339 329h1v1h-1zM340 349h1v1h-1zM340 321h1v1h-1zM341 354h1v1h-1zM341 326h1v1h-1zM342 342h1v1h-1zM342 339h1v1h-1zM343 350h1v1h-1zM344 332h1v1h-1zM344 331h1v1h-1zM345 353h1v1h-1zM345 349h1v1h-1zM346 321h1v1h-1zM347 347h1v1h-1zM348 347h1v1h-1zM348 337h1v1h-1zM349 324h1v1h-1zM349 329h1v1h-1zM350 328h1v1h-1zM350 341h1v1h-1zM351 345h1v1h-1zM352 326h1v1h-1zM353 331h1v1h-1zM354 334h1v1h-1zM355 338h1v1h-1zM356 324h1v1h-1zM357 318h1v1h-1zM358 325h1v1h-1zM359 348h1v1h-1zM360 328h1v1h-1zM361 328h1v1h-1zM362 347h1v1h-1zM363 340h1v1h-1zM364 349h1v1h-1zM365 344h1v1h-1zM366 345h1v1h-1zM367 341h1v1h-1zM368 327h1v1h-1zM369 337h1v1h-1zM370 347h1v1h-1zM370 322h1v1h-1zM371 321h1v1h-1zM371 347h1v1h-1zM372 322h1v1h-1zM373 319h1v1h-1zM373 340h1v1h-1zM374 340h1v1h-1zM375 320h1v1h-1zM376 329h1v1h-1zM377 344h1v1h-1zM378 320h1v1h-1zM379 347h1v1h-1zM380 321h1v1h-1zM381 321h1v1h-1zM382 345h1v1h-1zM382 343h1v1h-1zM383 344h1v1h-1zM384 327h1v1h-1zM385 321h1v1h-1zM385 342h1v1h-1zM386 328h1v1h-1zM387 318h1v1h-1zM388 327h1v1h-1zM389 329h1v1h-1zM390 348h1v1h-1zM391 345h1v1h-1zM392 318h1v1h-1zM393 331h1v1h-1zM394 329h1v1h-1zM395 335h1v1h-1zM396 345h1v1h-1zM397 344h1v1h-1zM397 323h1v1h-1zM398 324h1v1h-1zM398 342h1v1h-1zM399 318h1v1h-1zM400 333h1v1h-1zM401 323h1v1h-1zM402 329h1v1h-1zM403 326h1v1h-1zM404 327h1v1h-1zM405 340h1v1h-1zM406 321h1v1h-1zM407 320h1v1h-1zM408 340h1v1h-1zM409 338h1v1h-1zM410 330h1v1h-1zM411 346h1v1h-1zM412 346h1v1h-1zM412 318h1v1h-1zM413 326h1v1h-1zM414 334h1v1h-1zM425 340h1v1h-1zM428 329h1v1h-1zM431 330h1v1h-1zM434 326h1v1h-1zM437 322h1v1h-1zM441 326h1v1h-1zM442 344h1v1h-1zM444 343h1v1h-1zM445 328h1v1h-1zM450 335h1v1h-1zM451 323h1v1h-1zM453 328h1v1h-1zM459 334h1v1h-1zM45 344h1v1h-1zM45 345h1v1h-1zM45 349h1v1h-1zM45 350h1v1h-1zM45 351h1v1h-1zM45 353h1v1h-1zM45 356h1v1h-1zM45 359h1v1h-1zM45 360h1v1h-1zM45 362h1v1h-1zM45 364h1v1h-1zM45 368h1v1h-1zM373 365h1v1h-1zM313 361h1v1h-1zM256 376h1v1h-1zM153 341h1v1h-1zM246 333h1v1h-1zM419 363h1v1h-1zM372 325h1v1h-1zM175 353h1v1h-1zM241 369h1v1h-1zM77 319h1v1h-1zM84 371h1v1h-1zM261 363h1v1h-1zM194 382h1v1h-1zM113 382h1v1h-1zM73 382h1v1h-1zM103 382h1v1h-1z" fill="#e8e8a0"/><path d="M45.5 138V270" stroke="#80c8e0" stroke-width="1" shape-rendering="crispEdges"/><path d="M46.5 150V268" stroke="#3a7890" stroke-width="1" shape-rendering="crispEdges"/><polyline points="47.5,133 47.5,166 48.5,167 48.5,230 49.5,231 49.5,263.4 51.1,264 54.7,260.5 58.2,266.4 60.5,262.9 62.9,265.8 65.2,263.4 68.7,268.1 74,264.6 78.1,262.3 81,261.1 84.5,262.3 87.5,264 89.2,267.5 92.8,265.2 96.3,264 100,266.4 104,269.3 109,266 113,265 115,264.2 124,264.2 131,270.5 136,273.3 140,270 143,271 147,268.5 151,268.5 153,266.5 158,267.5 165,267.3 170,267 174.5,266 185,272 188.5,272.5 189.5,289 190.5,274 191,282 191.6,273 199,272 203,276.6 207,276 213,275.4 217,271.6 222,273 226,273.5 232.6,280 240,274 245,278.5 250,279 253,279 257,274.4 260,276.5 263,279.5 265,280.5 266.8,277.7 271.6,277.5 276,281 280,277.5 284,283.5 287,278.6 293.5,283 298,278.5 301,284 304,280 308,285 310.7,282 314,285 318.6,281.5 322.5,285 325,281 327,284.5 332,285 334,283 336,287 338.4,284 340,287 343,283.7 345,286 349,285.7 353,285 357,291 360,287 361.4,287.5 363.6,286.6 364.5,289 366,294 366.8,302.5 367.3,306 368.2,296 368.6,289.8 369.5,299.8 370,289 371.4,292 373.2,295 375,285.7 376.4,289.8 377.3,288.5 379.5,294.8 381.8,289.4 383.6,289.8 386.4,296.6 389,289.4 391.4,292.5 395,299.4 398.2,291.6 401.4,294.4 405,298.5 408.2,294.4 411,297.5 415.5,293 418,296.2 419.4,294.3 420.8,298 422.2,293.8 423.6,299 425.5,294.8 427.4,296.7 429.7,299 432.5,294.3 434,298 436.3,302.3 439.6,302.8 441.5,301.8 443.8,298.5 446.1,301.4 449,305 451.3,298.5 453.6,302.3 456,305 458.8,300.4 461.2,300.9 464.9,302.8 466.8,304.2 469.6,302.8 472,304.2 475.2,304.2 477.5,305.6" fill="none" stroke="#70c0e4" stroke-width="1"/></svg><div class="lab" style="right:621px;top:116px">500</div><div class="lab" style="left:483px;top:116px">50</div><div class="lab" style="right:621px;top:142px">450</div><div class="lab" style="left:483px;top:142px">45</div><div class="lab" style="right:621px;top:168px">400</div><div class="lab" style="left:483px;top:168px">40</div><div class="lab" style="right:621px;top:194px">350</div><div class="lab" style="left:483px;top:194px">35</div><div class="lab" style="right:621px;top:220px">300</div><div class="lab" style="left:483px;top:220px">30</div><div class="lab" style="right:621px;top:246px">250</div><div class="lab" style="left:483px;top:246px">25</div><div class="lab" style="right:621px;top:272px">200</div><div class="lab" style="left:483px;top:272px">20</div><div class="lab" style="right:621px;top:298px">150</div><div class="lab" style="left:483px;top:298px">15</div><div class="lab" style="right:621px;top:324px">100</div><div class="lab" style="left:483px;top:324px">10</div><div class="lab" style="right:621px;top:350px">50</div><div class="lab" style="left:483px;top:350px">5</div><div class="lab" style="left:5px;width:80px;text-align:center;top:383px">0</div><div class="lab" style="left:48px;width:80px;text-align:center;top:383px">10</div><div class="lab" style="left:91px;width:80px;text-align:center;top:383px">20</div><div class="lab" style="left:134px;width:80px;text-align:center;top:383px">30</div><div class="lab" style="left:178px;width:80px;text-align:center;top:383px">40</div><div class="lab" style="left:221px;width:80px;text-align:center;top:383px">50</div><div class="lab" style="left:264px;width:80px;text-align:center;top:383px">60</div><div class="lab" style="left:308px;width:80px;text-align:center;top:383px">70</div><div class="lab" style="left:351px;width:80px;text-align:center;top:383px">80</div><div class="lab" style="left:394px;width:80px;text-align:center;top:383px">90</div><div class="lab" style="left:464px;top:383px">100%</div><div class="lab" style="left:45px;top:109px">MB/sec</div><div class="lab" style="left:463px;top:109px">ms</div>

 <!-- right panel -->
 <div class="abs" style="left:531px;top:104px;width:86px;height:19px;box-sizing:border-box;border:1px solid #2C3C60;border-radius:3px;background:linear-gradient(to bottom,#FFFFFF,#F0F0EA 70%,#D8D6CC);"></div>
 <div class="txt" style="left:531px;width:86px;text-align:center;top:106px;">Start</div>
 <div class="abs" style="left:509px;top:143px;width:130px;height:118px;box-sizing:border-box;border:1px solid #D0D0BF;border-radius:4px;"></div>
 <div class="txt" style="left:516px;top:135px;padding:0 2px;background:#FAFAF8;color:#1E50A0;letter-spacing:0.25px;">Transfer Rate</div>
 <div class="txt" style="left:518px;top:152px;">Minimum</div>
 <div class="box" style="top:169px;height:13px;"><div class="val" style="top:0;color:#48B0F0;">145.6 MB/sec</div></div>
 <div class="txt" style="left:518px;top:185px;">Maximum</div>
 <div class="box" style="top:202px;height:14px;"><div class="val" style="top:0;color:#48B0F0;">480.1 MB/sec</div></div>
 <div class="txt" style="left:518px;top:218px;">Average:</div>
 <div class="box" style="top:235px;height:14px;"><div class="val" style="top:0;color:#48B0F0;">198.6 MB/sec</div></div>
 <div class="txt" style="left:518px;top:267px;">Access Time:</div>
 <div class="box" style="top:285px;height:14px;"><div class="val" style="top:0;color:#F0F060;">6.9 ms</div></div>
 <div class="txt" style="left:518px;top:312px;">Burst Rate</div>
 <div class="box" style="top:330px;height:14px;"><div class="val" style="top:0;color:#fff;">391.5 MB/sec</div></div>
 <div class="txt" style="left:518px;top:354px;">CPU Usage</div>
 <div class="box" style="top:372px;height:14px;"><div class="val" style="top:0;color:#fff;letter-spacing:-0.4px;">2.8%</div></div>
</div>
</body></html>
